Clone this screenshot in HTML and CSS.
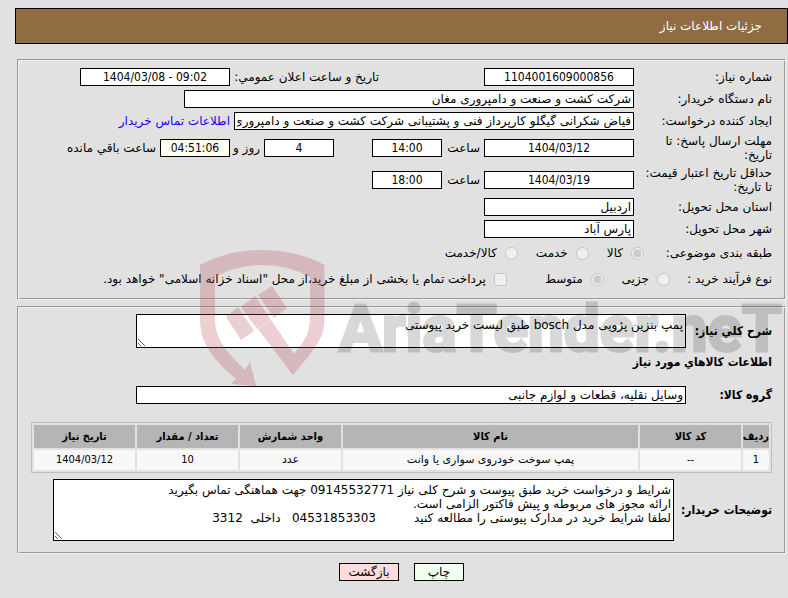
FILE: index.html
```html
<!DOCTYPE html>
<html lang="fa" dir="rtl">
<head>
<meta charset="UTF-8" />
<meta name="viewport" content="width=device-width, initial-scale=1" />
<title>جزئیات اطلاعات نیاز</title>
<link rel="stylesheet" href="styles.css">
</head>
<body>

<!-- Header -->
<header>
  <h1>جزئیات اطلاعات نیاز</h1>
</header>

<form>
  <!-- Need info -->
  <fieldset class="info">
    <div class="row">
      <label class="title" for="needNo">شماره نیاز:</label>
      <input class="md num" type="text" id="needNo" value="1104001609000856" readonly />
      <label class="announce" for="announceDate">تاریخ و ساعت اعلان عمومي:</label>
      <input class="md num" type="text" id="announceDate" value="1404/03/08 - 09:02" dir="ltr" readonly />
    </div>
    <div class="row">
      <label class="title" for="buyer">نام دستگاه خریدار:</label>
      <input class="xl" type="text" id="buyer" value="شرکت کشت و صنعت و دامپروری مغان" readonly />
    </div>
    <div class="row">
      <label class="title" for="creator">ایجاد کننده درخواست:</label>
      <input class="lg" type="text" id="creator" value="فیاض شکرانی گیگلو کارپرداز فنی و پشتیبانی شرکت کشت و صنعت و دامپروری" readonly />
      <a href="#contact">اطلاعات تماس خریدار</a>
    </div>
    <div class="row">
      <label class="title" for="replyDate">مهلت ارسال پاسخ: تا تاریخ:</label>
      <input class="md num" type="text" id="replyDate" value="1404/03/12" readonly />
      <label class="hour" for="replyHour">ساعت</label>
      <input class="sm num" type="text" id="replyHour" value="14:00" readonly />
      <input class="sm num days" type="text" id="days" value="4" readonly />
      <label class="day" for="days">روز و</label>
      <input class="sm num remain" type="text" id="remain" value="04:51:06" readonly />
      <label for="remain">ساعت باقي مانده</label>
    </div>
    <div class="row">
      <label class="title" for="priceDate">حداقل تاریخ اعتبار قیمت: تا تاریخ:</label>
      <input class="md num" type="text" id="priceDate" value="1404/03/19" readonly />
      <label class="hour" for="priceHour">ساعت</label>
      <input class="sm num" type="text" id="priceHour" value="18:00" readonly />
    </div>
    <div class="row">
      <label class="title" for="province">استان محل تحویل:</label>
      <input class="md" type="text" id="province" value="اردبیل" readonly />
    </div>
    <div class="row">
      <label class="title" for="city">شهر محل تحویل:</label>
      <input class="md" type="text" id="city" value="پارس آباد" readonly />
    </div>
    <div class="row options">
      <span class="title category">طبقه بندی موضوعی:</span>
      <label class="opt"><input type="radio" name="category" checked disabled /> کالا</label>
      <label class="opt"><input type="radio" name="category" disabled /> خدمت</label>
      <label class="opt"><input type="radio" name="category" disabled /> کالا/خدمت</label>
    </div>
    <div class="row options">
      <span class="title process">نوع فرآیند خرید :</span>
      <label class="opt"><input type="radio" name="process" disabled /> جزیی</label>
      <label class="opt"><input type="radio" name="process" checked disabled /> متوسط</label>
      <label class="opt treasury"><input type="checkbox" disabled /> پرداخت تمام یا بخشی از مبلغ خرید،از محل "اسناد خزانه اسلامی" خواهد بود.</label>
    </div>
  </fieldset>

  <!-- Goods -->
  <fieldset class="goods">
    <div class="row">
      <label class="strong" for="summary">شرح كلي نياز:</label>
      <textarea class="summary" id="summary" readonly>پمپ بنزین پژویی مدل bosch طبق لیست خرید پیوستی</textarea>
    </div>
    <h2>اطلاعات كالاهاي مورد نياز</h2>
    <div class="row">
      <label class="strong" for="group">گروه کالا:</label>
      <input class="xxl" type="text" id="group" value="وسایل نقلیه، قطعات و لوازم جانبی" readonly />
    </div>
    <table>
      <colgroup>
        <col class="c-row" /><col class="c-cell" /><col /><col class="c-cell" /><col class="c-cell" /><col class="c-cell" />
      </colgroup>
      <thead>
        <tr>
          <th>ردیف</th>
          <th>کد کالا</th>
          <th>نام کالا</th>
          <th>واحد شمارش</th>
          <th>تعداد / مقدار</th>
          <th>تاریخ نیاز</th>
        </tr>
      </thead>
      <tbody>
        <tr>
          <td>1</td>
          <td>--</td>
          <td class="text">پمپ سوخت خودروی سواری یا وانت</td>
          <td class="text">عدد</td>
          <td>10</td>
          <td>1404/03/12</td>
        </tr>
      </tbody>
    </table>
    <div class="row">
      <label class="strong wide" for="notes">توضيحات خريدار:</label>
      <textarea class="notes" id="notes" readonly>شرایط و درخواست خرید طبق پیوست و شرح کلی نیاز 09145532771 جهت هماهنگی تماس بگیرید
ارائه مجوز های مربوطه و پیش فاکتور الزامی است.
لطفا شرایط خرید در مدارک پیوستی را مطالعه کنید          04531853303   داخلی  3312</textarea>
    </div>
  </fieldset>

  <div class="actions">
    <button type="button" class="print">چاپ</button>
    <button type="button" class="back">بازگشت</button>
  </div>
</form>

<!-- Watermark -->
<svg class="watermark" viewBox="196 248 592 142" aria-hidden="true">
  <g class="shield">
    <path d="M200 265 Q228 250 262 250 Q297 250 324.500 265 V318 C324.500 338 317 346 293 375 L258 329 L271 320 L294 354 C305 341 310 332 310 318 V277 Q288 265 262 265 Q236 265 215 277 V318 C215 339 225 350 245 370 L250 362 L256 386 L231 384 L236 379 C213 359 200 344 200 318 Z" />
    <path d="M226 317 L238 307 L254 331 L241 340 Z" />
    <path d="M241 307 L255 296 L271 320 L257 329 Z" />
    <path d="M258 295 L272 286 L287 308 L274 318 Z" />
  </g>
  <text x="339" y="351">AriaTender.neT</text>
</svg>

</body>
</html>
```

FILE: styles.css
```css
/* Reset and basics */
* {margin:0; padding:0; box-sizing:border-box;}
body {
  position: relative;
  padding: 8px 0 0 15px;
  font: 12px/14px "DejaVu Sans", sans-serif;
  background: #e1e1e1;
  color: #000;
  overflow-x: hidden;
  direction: ltr;
}
header, form {direction: rtl;}
a {text-decoration: none; color: #1a00ff;}

/* Header */
header {
  display: flex;
  align-items: center;
  height: 36px;
  padding: 0 25px;
  margin-bottom: 15px;
  background: #8f6d40;
  border: 1px solid #000;
}
h1 {
  font-size: 12px;
  font-weight: normal;
  color: #fff;
}

/* Fieldsets */
fieldset {
  display: flex;
  flex-direction: column;
  gap: 4px;
  min-width: 0;
  margin: 0 2px 6px 2px;
  padding: 8px 13px 9px;
  border: 1px solid;
  border-color: #999 #f0f0f0 #f0f0f0 #999;
  box-shadow: inset 1px 1px 0 #f0f0f0, inset -1px -1px 0 #999;
}
.row {
  display: flex;
  align-items: center;
  gap: 4px;
  white-space: nowrap;
}

/* Fields */
input[type="text"], textarea {
  border: 1px solid #000;
  background: #fff;
  color: #000;
  font: inherit;
}
input[type="text"] {
  height: 18px;
  padding: 0 2px;
}
textarea {
  padding: 3px 2px;
}
.sm {width: 70px;}
.md {width: 150px;}
.lg {width: 400px;}
.xl {width: 450px;}
.xxl {width: 550px;}
input.num {
  font-family: "DejaVu Sans Condensed", "DejaVu Sans", sans-serif;
  text-align: center;
}
.title {
  width: 134px;
  white-space: normal;
}
.announce {
  width: 145px;
  margin-right: 101px;
}
.hour {width: 34px;}
.days {margin-right: 34px;}
.day {width: 26px;}
input.remain {background: #fffff0;}

/* Radio rows */
.options {
  gap: 18px;
  height: 22px;
}
.options .category {
  width: 110px;
  white-space: nowrap;
}
.options .process {
  width: 84px;
  white-space: nowrap;
}
.opt {
  display: flex;
  align-items: center;
  gap: 8px;
}
.opt input {
  width: 13px;
  height: 13px;
}
.treasury {margin-right: 20px;}

/* Goods */
.goods {
  gap: 6px;
  padding-top: 7px;
  padding-bottom: 12px;
}
.strong, h2 {
  font-family: "DejaVu Sans Condensed", "DejaVu Sans", sans-serif;
  font-size: 12px;
  font-weight: bold;
}
h2 {margin: 1px 0 11px;}
.strong {width: 82px;}
.wide {width: 94px;}
.summary {
  width: 550px;
  height: 34px;
}
.notes {
  flex: 1;
  height: 62px;
  margin-left: 22px;
}

/* Goods table */
table {
  table-layout: fixed;
  width: 100%;
  margin-top: 12px;
  border: 1px solid #c0c0c0;
  border-spacing: 2px;
  font-family: "DejaVu Sans Condensed", "DejaVu Sans", sans-serif;
  font-size: 11px;
  text-align: center;
}
.c-row {width: 26px;}
.c-cell {width: 101px;}
th {
  height: 23px;
  background: #b5b5b5;
  white-space: nowrap;
}
td {
  height: 20px;
  background: #f7f7f7;
}
td.text {font-family: "DejaVu Sans", sans-serif;}

/* Buttons */
.actions {
  display: flex;
  justify-content: center;
  gap: 15px;
  padding: 3px 0 18px;
}
button {
  height: 18px;
  border: 1px solid #000;
  font: inherit;
  color: #000;
}
.print {
  width: 50px;
  background: #f0fff0;
}
.back {
  width: 60px;
  background: #ffdcdc;
}

/* Watermark */
.watermark {
  position: absolute;
  top: 248px;
  left: 196px;
  width: 592px;
  height: 142px;
  pointer-events: none;
}
.shield {
  fill: #b3434f;
  opacity: 0.25;
}
.watermark text {
  fill: #000;
  stroke: #000;
  stroke-width: 3px;
  opacity: 0.15;
  font: bold 64px Roboto, "Liberation Sans", sans-serif;
}
```
